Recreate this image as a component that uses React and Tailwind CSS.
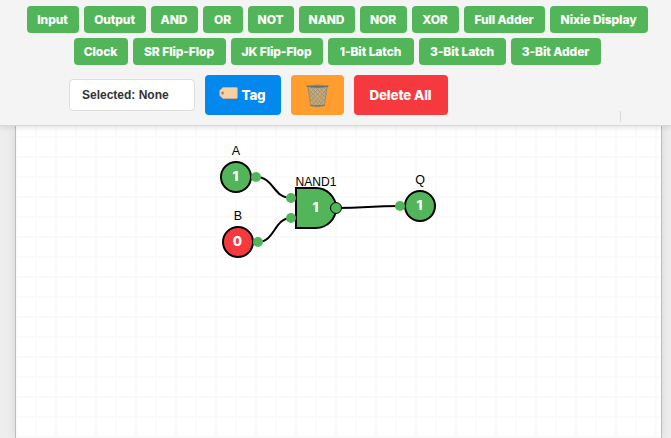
const rows = [
  [
    ['Input', 'w-[52px]'],
    ['Output', 'w-[62px]'],
    ['AND', 'w-[47px]'],
    ['OR', 'w-[40px]'],
    ['NOT', 'w-[46px]'],
    ['NAND', 'w-[56px]'],
    ['NOR', 'w-[47px]'],
    ['XOR', 'w-[47px]'],
    ['Full Adder', 'w-[81px]'],
    ['Nixie Display', 'w-[98px]'],
  ],
  [
    ['Clock', 'w-[54px]'],
    ['SR Flip-Flop', 'w-[93px]'],
    ['JK Flip-Flop', 'w-[92px]'],
    ['1-Bit Latch', 'w-[86px]'],
    ['3-Bit Latch', 'w-[87px]'],
    ['3-Bit Adder', 'w-[90px]'],
  ],
];

function TagIcon() {
  return (
    <svg width="19" height="12" viewBox="0 0 19 12" className="shrink-0">
      <path d="M4 .5H17.5Q18.3.5 18.3 1.3V10.7Q18.3 11.5 17.5 11.5H4L.7 8.5V3.5Z" fill="#fbd0a0" stroke="#e6b584" strokeWidth=".6" />
      <circle cx="3.6" cy="6" r="1.5" fill="#a08070" stroke="#e7b88c" strokeWidth=".5" />
    </svg>
  );
}

function BasketIcon() {
  return (
    <svg width="23" height="23" viewBox="0 0 23 23">
      <path d="M1.5 2H21.5L18.7 21.5Q11.5 23.5 4.3 21.5Z" fill="#c9ab76" />
      <path
        d="M2 5 18 22M3 9 14 22M4 14 10 22M5 3 19 18M9 3 20 14M13 3 20 10M17 3 21 7M21 5 5 22M20 9 9 22M19 14 13 22M18 3 4 18M14 3 3 14M10 3 3 10M6 3 2 7"
        stroke="#938d76"
        strokeWidth=".7"
        fill="none"
      />
      <path d="M2 3 4.5 21M21 3 18.5 21" stroke="#9b8b6c" strokeWidth="1" />
      <path d="M.7 1.4Q11.5 0 22.3 1.4V3Q11.5 4.3.7 3Z" fill="#626d74" />
      <path d="M2 1.8Q11.5.8 21 1.8" stroke="#9ba2a2" strokeWidth=".6" fill="none" />
      <path d="M4.2 20.4Q11.5 22.1 18.8 20.4L18.5 22Q11.5 23.5 4.5 22Z" fill="#69757e" />
    </svg>
  );
}

function Circuit() {
  return (
    <svg width="645" height="312" viewBox="16 126 645 312" className="block">
      <defs>
        <pattern id="grid" x="15" y="116" width="20" height="20" patternUnits="userSpaceOnUse">
          <path d="M0 1H20M1 0V20" stroke="#fafafa" strokeWidth="2" />
        </pattern>
      </defs>
      <rect x="16" y="126" width="645" height="312" fill="url(#grid)" />
      <g fill="none" stroke="#000" strokeWidth="2">
        <path d="M256 177C274 177 273 198 291 198" />
        <path d="M258 242C275 242 274 218 291 218" />
        <path d="M336 208C368 208 368 206 400 206" />
        <g fill="#53b559">
          <circle cx="236" cy="177" r="15" />
          <circle cx="238" cy="242" r="15" fill="#f6393e" />
          <path d="M296 188H316A20 20 0 0 1 316 228H296Z" />
          <circle cx="420" cy="206" r="15" />
        </g>
      </g>
      <g fill="#53b559">
        <circle cx="256" cy="177" r="5" />
        <circle cx="258" cy="242" r="5" />
        <circle cx="291" cy="198" r="5" />
        <circle cx="291" cy="218" r="5" />
        <circle cx="400" cy="206" r="5" />
        <circle cx="336" cy="208" r="5.5" stroke="#000" />
      </g>
      <g textAnchor="middle" className="fill-black font-['Liberation_Sans',sans-serif] text-[12.5px]">
        <text x="236" y="155">A</text>
        <text x="238" y="220">B</text>
        <text x="316" y="186" textLength="41" lengthAdjust="spacingAndGlyphs" className="text-[12px]">NAND1</text>
        <text x="420" y="184">Q</text>
      </g>
      <g textAnchor="middle" className="fill-white font-['Inter',sans-serif] text-[13.5px] font-extrabold">
        <text x="235.5" y="181">1</text>
        <text x="237.5" y="246">0</text>
        <text x="315.5" y="212">1</text>
        <text x="419.5" y="210">1</text>
      </g>
    </svg>
  );
}

export default function App() {
  return (
    <div className="flex h-[438px] w-[671px] flex-col overflow-hidden bg-[#eeeeee] font-['Inter',sans-serif]">
      <header className="z-10 flex h-[126px] shrink-0 flex-col border-b border-[#d8d8d8] bg-[#f4f4f4] pt-1.5 shadow-[0_2px_5px_rgba(0,0,0,0.1)]">
        <div className="flex flex-col gap-[5px] pl-1">
          {rows.map((row, i) => (
            <div key={i} className="flex justify-center gap-[5px]">
              {row.map(([label, width]) => (
                <button key={label} className={`${width} h-[27px] shrink-0 rounded-[4px] bg-[#53b559] pr-px text-[12px] font-extrabold tracking-[-0.1px] whitespace-nowrap text-white`}>
                  {label}
                </button>
              ))}
            </div>
          ))}
        </div>
        <div className="mt-2.5 flex h-10 items-center pl-[69px]">
          <div className="flex h-8 w-[126px] items-center rounded-[4px] border border-[#dddddd] bg-white px-3 font-['Liberation_Sans',sans-serif] text-[12px] font-bold text-[#333333]">
            Selected: None
          </div>
          <button className="ml-2.5 flex h-10 w-[76px] items-center justify-center gap-1 rounded-[4px] bg-[#0389ee] pr-[2px] text-[13.33px] font-extrabold tracking-[-0.2px] text-white">
            <span className="-mt-1"><TagIcon /></span>
            <span className="pt-0.5">Tag</span>
          </button>
          <button className="ml-2.5 flex h-10 w-[53px] items-center justify-center rounded-[4px] bg-[#ff9d2e]">
            <BasketIcon />
          </button>
          <button className="ml-2.5 h-10 w-[94px] rounded-[4px] bg-[#f6393e] pt-0.5 pr-px text-[13.33px] font-extrabold tracking-[-0.1px] whitespace-nowrap text-white">
            Delete All
          </button>
          <div className="-mb-[7px] ml-[172px] h-[11px] w-px self-end bg-[#d8d8d8]" />
        </div>
      </header>
      <main className="mr-[9px] ml-[15px] h-[312px] border-x border-[#bdbdbd] bg-white shadow-[0_0_10px_rgba(0,0,0,0.1)]">
        <Circuit />
      </main>
    </div>
  );
}
